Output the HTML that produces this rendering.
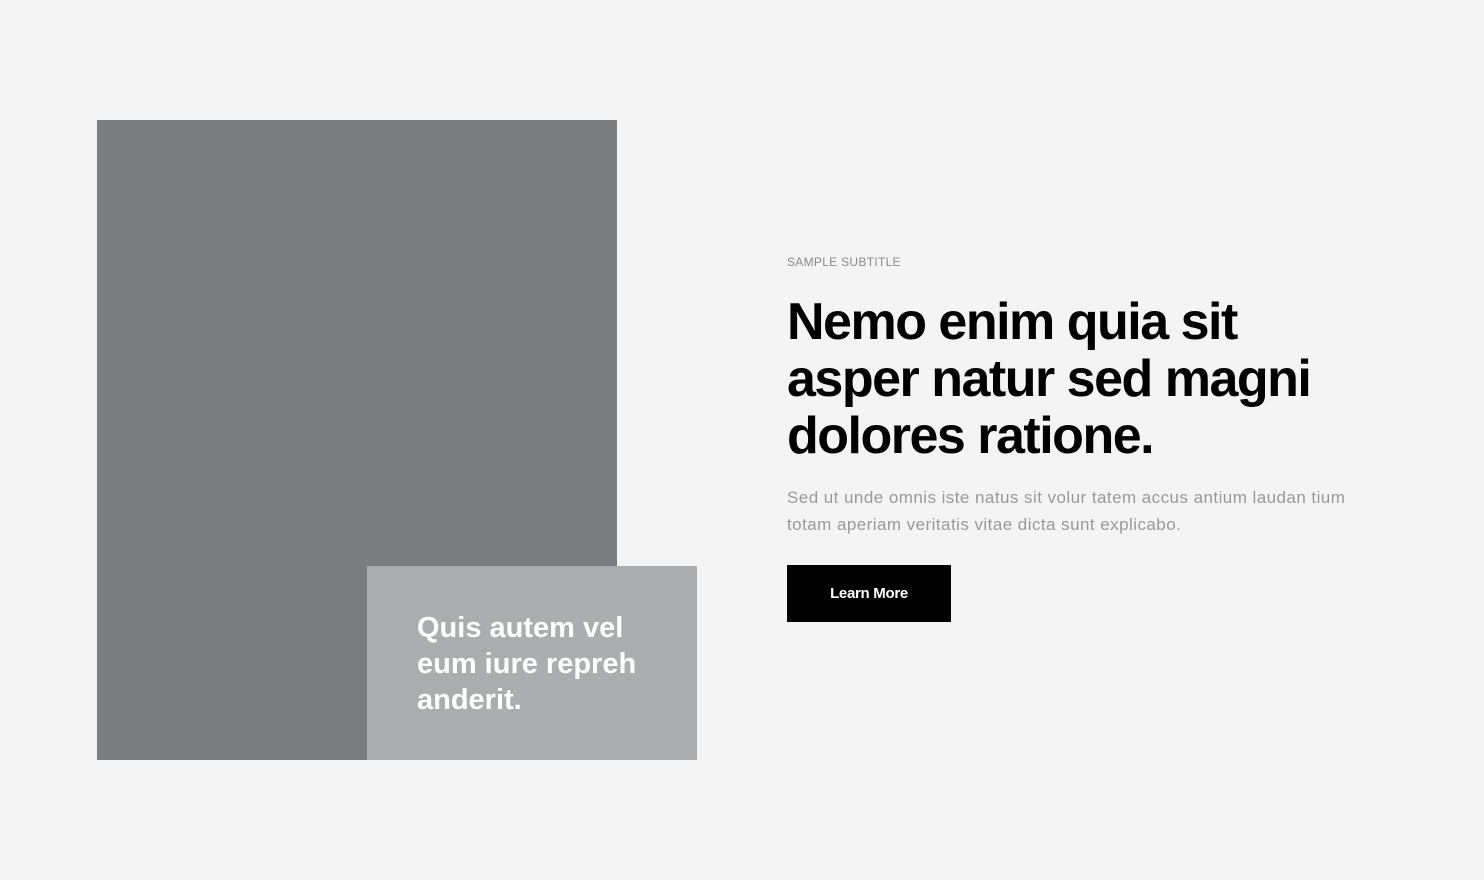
<!DOCTYPE html>
<html><head><meta charset="utf-8"><style>
*{margin:0;padding:0;box-sizing:border-box}
body{width:1484px;height:880px;background:#f4f4f4;font-family:"Liberation Sans",Arial,sans-serif;position:relative;overflow:hidden}
.a{position:absolute;left:97px;top:120px;width:520px;height:640px;background:#7b7c7d}
.b{position:absolute;left:367px;top:566px;width:330px;height:194px;background:#acadae}
.b p{position:absolute;left:50px;top:44px;color:#fff;font-weight:bold;font-size:29px;line-height:36px;letter-spacing:0px}
.sub{position:absolute;left:787px;top:255px;font-size:12px;color:#8a8a8a;letter-spacing:0.3px}
h1{position:absolute;left:787px;top:294px;font-size:52px;line-height:57px;font-weight:bold;color:#000;letter-spacing:-1.5px;width:640px}
.p{position:absolute;left:787px;top:484px;font-size:17px;line-height:27px;color:#999;letter-spacing:0.45px;width:640px}
.btn{position:absolute;left:787px;top:565px;width:164px;height:57px;background:#000;color:#fff;font-weight:bold;font-size:15px;text-align:center;line-height:57px;letter-spacing:-0.3px}
</style></head><body>
<div class="a"></div>
<div class="b"><p>Quis autem vel<br>eum iure repreh<br>anderit.</p></div>
<div class="sub">SAMPLE SUBTITLE</div>
<h1>Nemo enim quia sit<br>asper natur sed magni<br>dolores ratione.</h1>
<div class="p">Sed ut unde omnis iste natus sit volur tatem accus antium laudan tium<br>totam aperiam veritatis vitae dicta sunt explicabo.</div>
<div class="btn">Learn More</div>
</body></html>
